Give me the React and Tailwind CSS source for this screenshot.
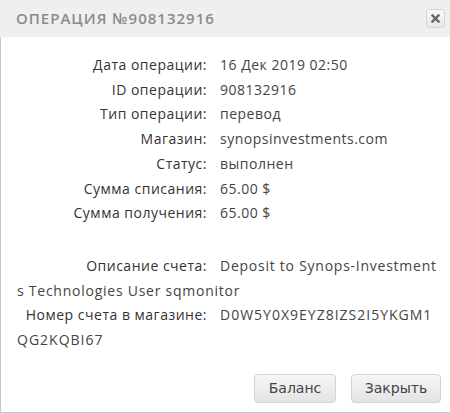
import React from "react";

const rows = [
  ["Дата операции:", "16 Дек 2019 02:50"],
  ["ID операции:", "908132916"],
  ["Тип операции:", "перевод"],
  ["Магазин:", "synopsinvestments.com"],
  ["Статус:", "выполнен"],
  ["Сумма списания:", "65.00 $"],
  ["Сумма получения:", "65.00 $"],
];

function Row({ label, value, spacing = "" }) {
  return (
    <div className="break-all leading-[24.7px] tracking-[0.5px]">
      <span className="inline-block w-[190px] text-right text-[#333] font-medium">{label}</span>
      <span className={`ml-[13px] text-[#444] ${spacing}`}>{value}</span>
    </div>
  );
}

export default function App() {
  return (
    <div className="w-[450px] h-[413px] bg-white font-['Open_Sans',sans-serif] text-[14px] flex flex-col">
      <div className="h-[37px] bg-[#efefef] flex items-center justify-between pl-4 pr-[5px] shrink-0">
        <span className="text-[15px] font-semibold tracking-[1px] text-[#8a8a8a] uppercase">
          Операция №908132916
        </span>
        <button className="w-[19px] h-[19px] rounded-[3px] border border-[#d6d6d6] bg-gradient-to-b from-[#f8f8f8] to-[#e8e8e8] flex items-center justify-center">
          <svg width="9" height="9" viewBox="0 0 9 9">
            <path d="M1.5 1.5 L7.5 7.5 M7.5 1.5 L1.5 7.5" stroke="#666" strokeWidth="2.4" strokeLinecap="square" />
          </svg>
        </button>
      </div>
      <div className="flex-1 flex flex-col border-l border-b border-[#c8c8c8]">
        <div className="pl-4 pr-[12px] pt-[16px]">
          {rows.map(([l, v]) => (
            <Row key={l} label={l} value={v} />
          ))}
          <div className="h-[28px]" />
          <Row
            label="Описание счета:"
            value="Deposit to Synops-Investments Technologies User sqmonitor"
            spacing="tracking-[0.75px]"
          />
          <Row
            label="Номер счета в магазине:"
            value="D0W5Y0X9EYZ8IZS2I5YKGM1QG2KQBI67"
            spacing="tracking-[1px]"
          />
        </div>
        <div className="mt-auto flex justify-end gap-[15px] pr-[9px] pb-[9px]">
          <button className="w-[82px] h-[29px] rounded-[4px] border border-[#d3d3d3] bg-gradient-to-b from-[#f6f6f6] to-[#e4e4e4] text-[#444] font-['DejaVu_Sans',sans-serif] text-[14px]">
            Баланс
          </button>
          <button className="w-[90px] h-[29px] rounded-[4px] border border-[#d3d3d3] bg-gradient-to-b from-[#f6f6f6] to-[#e4e4e4] text-[#444] font-['DejaVu_Sans',sans-serif] text-[14px]">
            Закрыть
          </button>
        </div>
      </div>
    </div>
  );
}
